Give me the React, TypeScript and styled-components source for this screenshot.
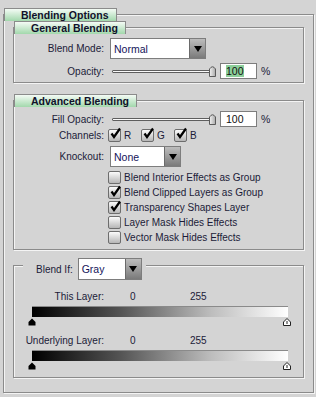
import * as React from 'react';
import styled, { createGlobalStyle } from 'styled-components';

const GlobalStyle = createGlobalStyle`
  html, body {
    margin: 0;
    padding: 0;
    background: #d4d4d4;
  }
  body {
    font-family: "Liberation Sans", Arial, sans-serif;
    font-size: 10px;
    color: #1b1b38;
  }
`;

const Page = styled.div`
  width: 316px;
  height: 397px;
  padding-top: 14px;
  box-sizing: border-box;
  overflow: hidden;
`;

const Frame = styled.div`
  margin-left: 3px;
  width: 311px;
  box-sizing: border-box;
  border: 1px solid #8b8b8b;
  box-shadow: inset 1px 1px 0 #f4f4f4, 1px 1px 0 #f4f4f4;
  padding: 0 9px 14px;
  display: flex;
  flex-direction: column;
`;

const Group = styled.div<{ $mt: number; $pb: number }>`
  margin-top: ${p => p.$mt}px;
  border: 1px solid #8b8b8b;
  box-shadow: inset 1px 1px 0 #f4f4f4, 1px 1px 0 #f4f4f4;
  padding-bottom: ${p => p.$pb}px;
  display: flex;
  flex-direction: column;
`;

const Tab = styled.div<{ $ml?: number }>`
  align-self: flex-start;
  margin: -7px 0 0 ${p => p.$ml ?? 0}px;
  height: 13px;
  box-sizing: border-box;
  padding: 0 7px 0 16px;
  border: 1px solid #8b8b8b;
  border-bottom: none;
  background: linear-gradient(#f4fbf5, #a2d8ac);
  font-weight: bold;
  font-size: 10.5px;
  line-height: 12px;
  color: #10102a;
  white-space: nowrap;
`;

const Row = styled.div<{ $mt: number; $h: number }>`
  display: flex;
  align-items: center;
  margin-top: ${p => p.$mt}px;
  height: ${p => p.$h}px;
`;

const Label = styled.span`
  width: 90px;
  flex-shrink: 0;
  text-align: right;
  white-space: nowrap;
`;

const SelectBox = styled.div<{ $w: number; $h: number; $ml: number }>`
  margin-left: ${p => p.$ml}px;
  width: ${p => p.$w}px;
  height: ${p => p.$h}px;
  box-sizing: border-box;
  border: 1px solid #7d7d7d;
  background: #fff;
  display: flex;
`;

const SelectText = styled.span`
  flex: 1;
  padding-left: 3px;
  display: flex;
  align-items: center;
  font-size: 10.5px;
  color: #14145a;
`;

const SelectButton = styled.span`
  width: 15px;
  border-left: 1px solid #6a6a6a;
  background: linear-gradient(#bdbdbd, #7a7a7a);
  display: flex;
  align-items: center;
  justify-content: center;
`;

const Arrow = styled.span`
  width: 0;
  height: 0;
  border-left: 4px solid transparent;
  border-right: 4px solid transparent;
  border-top: 6px solid #000;
`;

const SliderTrack = styled.div<{ $w: number; $ml: number }>`
  position: relative;
  margin-left: ${p => p.$ml}px;
  width: ${p => p.$w}px;
  height: 12px;
  display: flex;
  align-items: center;
`;

const TrackLine = styled.div`
  flex: 1;
  height: 1px;
  border: 1px solid #5e5e5e;
  border-radius: 1px;
  background: #fafafa;
`;

const Thumb = styled.svg`
  position: absolute;
  top: 0;
`;

const NumField = styled.div<{ $ml: number }>`
  margin-left: ${p => p.$ml}px;
  width: 37px;
  height: 16px;
  box-sizing: border-box;
  border: 1px solid #7d7d7d;
  background: #fff;
  padding-left: 5px;
  display: flex;
  align-items: center;
  font-size: 10.5px;
  color: #111;
`;

const NumText = styled.span<{ $hl: boolean }>`
  background: ${p => (p.$hl ? '#8ccf9a' : 'transparent')};
  line-height: 12px;
`;

const Percent = styled.span`
  margin-left: 4px;
  font-size: 10.5px;
`;

const Channels = styled.div`
  margin-left: 4px;
  display: flex;
`;

const Channel = styled.div`
  width: 33px;
  display: flex;
  align-items: center;
`;

const Box = styled.span`
  width: 13px;
  height: 13px;
  flex-shrink: 0;
  box-sizing: border-box;
  border: 1px solid #6d6d6d;
  border-radius: 2px;
  background: linear-gradient(#fbfbfb, #b6b6b6);
  display: inline-flex;
  align-items: center;
  justify-content: center;
`;

const BoxText = styled.span`
  margin-left: 3px;
  white-space: nowrap;
`;

const CheckList = styled.div`
  margin: 3px 0 0 94px;
  display: flex;
  flex-direction: column;
`;

const CheckRow = styled.div`
  height: 15px;
  display: flex;
  align-items: center;
`;

const Legend = styled.div`
  align-self: flex-start;
  margin: -8px 0 0 9px;
  padding: 0 4px 0 13px;
  height: 22px;
  background: #d4d4d4;
  display: flex;
  align-items: center;
`;

const Value = styled.span<{ $ml: number; $w: number }>`
  margin-left: ${p => p.$ml}px;
  width: ${p => p.$w}px;
`;

const GradientBar = styled.div`
  margin: 4px 0 0 18px;
  width: 256px;
  height: 11px;
  box-sizing: border-box;
  border-top: 1px solid #8a8a8a;
  background: linear-gradient(to right, #000 0%, #555 35%, #bdbdbd 70%, #fff 100%);
`;

const Markers = styled.div`
  margin: 1px 0 0 14px;
  width: 263px;
  height: 8px;
  display: flex;
  justify-content: space-between;
`;

const Check: React.FC = () => (
  <svg width="13" height="13" viewBox="0 0 13 13" style={{ margin: '-3px -2px 0 0' }}>
    <path d="M2.5 6.5 L5 10 L11 1.5" fill="none" stroke="#000" strokeWidth="2.2" />
  </svg>
);

const CheckBox: React.FC<{ checked?: boolean }> = ({ checked }) => <Box>{checked && <Check />}</Box>;

const Select: React.FC<{ value: string; w: number; h: number; ml: number }> = ({ value, w, h, ml }) => (
  <SelectBox $w={w} $h={h} $ml={ml}>
    <SelectText>{value}</SelectText>
    <SelectButton>
      <Arrow />
    </SelectButton>
  </SelectBox>
);

const Slider: React.FC<{ value: number; w: number; ml: number }> = ({ value, w, ml }) => (
  <SliderTrack $w={w} $ml={ml}>
    <TrackLine />
    <Thumb width="7" height="12" viewBox="0 0 7 12" style={{ left: ((w - 7) * value) / 100 }}>
      <defs>
        <linearGradient id="thumbFill" x1="0" y1="0" x2="1" y2="0">
          <stop offset="0" stopColor="#f2f2f2" />
          <stop offset="1" stopColor="#a9a9a9" />
        </linearGradient>
      </defs>
      <path d="M0.5 11.5 V4 Q3.5 -0.5 6.5 4 V11.5 Z" fill="url(#thumbFill)" stroke="#5a5a5a" />
    </Thumb>
  </SliderTrack>
);

const BlackMarker: React.FC = () => (
  <svg width="8" height="8" viewBox="0 0 8 8">
    <path d="M4 0.5 L7.5 4 V7.5 H0.5 V4 Z" fill="#000" />
  </svg>
);

const WhiteMarker: React.FC = () => (
  <svg width="8" height="8" viewBox="0 0 8 8">
    <path d="M4 0.5 L7.5 4 V7.5 H0.5 V4 Z" fill="#fff" stroke="#222" />
    <path d="M4 3 V6" stroke="#222" />
  </svg>
);

const checks: [string, boolean][] = [
  ['Blend Interior Effects as Group', false],
  ['Blend Clipped Layers as Group', true],
  ['Transparency Shapes Layer', true],
  ['Layer Mask Hides Effects', false],
  ['Vector Mask Hides Effects', false],
];

const LayerRange: React.FC<{ label: string; mt: number }> = ({ label, mt }) => (
  <>
    <Row $mt={mt} $h={12}>
      <Label>{label}</Label>
      <Value $ml={26} $w={60}>0</Value>
      <Value $ml={0} $w={30}>255</Value>
    </Row>
    <GradientBar />
    <Markers>
      <BlackMarker />
      <WhiteMarker />
    </Markers>
  </>
);

export default function App() {
  return (
    <Page>
      <GlobalStyle />
      <Frame>
        <Tab $ml={-9}>Blending Options</Tab>

        <Group $mt={6} $pb={3}>
          <Tab>General Blending</Tab>
          <Row $mt={4} $h={21}>
            <Label>Blend Mode:</Label>
            <Select value="Normal" w={96} h={21} ml={6} />
          </Row>
          <Row $mt={4} $h={16}>
            <Label>Opacity:</Label>
            <Slider value={100} w={104} ml={8} />
            <NumField $ml={4}>
              <NumText $hl>100</NumText>
            </NumField>
            <Percent>%</Percent>
          </Row>
        </Group>

        <Group $mt={17} $pb={4}>
          <Tab>Advanced Blending</Tab>
          <Row $mt={4} $h={16}>
            <Label>Fill Opacity:</Label>
            <Slider value={100} w={104} ml={8} />
            <NumField $ml={4}>
              <NumText $hl={false}>100</NumText>
            </NumField>
            <Percent>%</Percent>
          </Row>
          <Row $mt={1} $h={14}>
            <Label>Channels:</Label>
            <Channels>
              {['R', 'G', 'B'].map(c => (
                <Channel key={c}>
                  <CheckBox checked />
                  <BoxText>{c}</BoxText>
                </Channel>
              ))}
            </Channels>
          </Row>
          <Row $mt={4} $h={21}>
            <Label>Knockout:</Label>
            <Select value="None" w={71} h={21} ml={6} />
          </Row>
          <CheckList>
            {checks.map(([text, on]) => (
              <CheckRow key={text}>
                <CheckBox checked={on} />
                <BoxText>{text}</BoxText>
              </CheckRow>
            ))}
          </CheckList>
        </Group>

        <Group $mt={15} $pb={7}>
          <Legend>
            <span>Blend If:</span>
            <Select value="Gray" w={64} h={22} ml={5} />
          </Legend>
          <LayerRange label="This Layer:" mt={10} />
          <LayerRange label="Underlying Layer:" mt={8} />
        </Group>
      </Frame>
    </Page>
  );
}
